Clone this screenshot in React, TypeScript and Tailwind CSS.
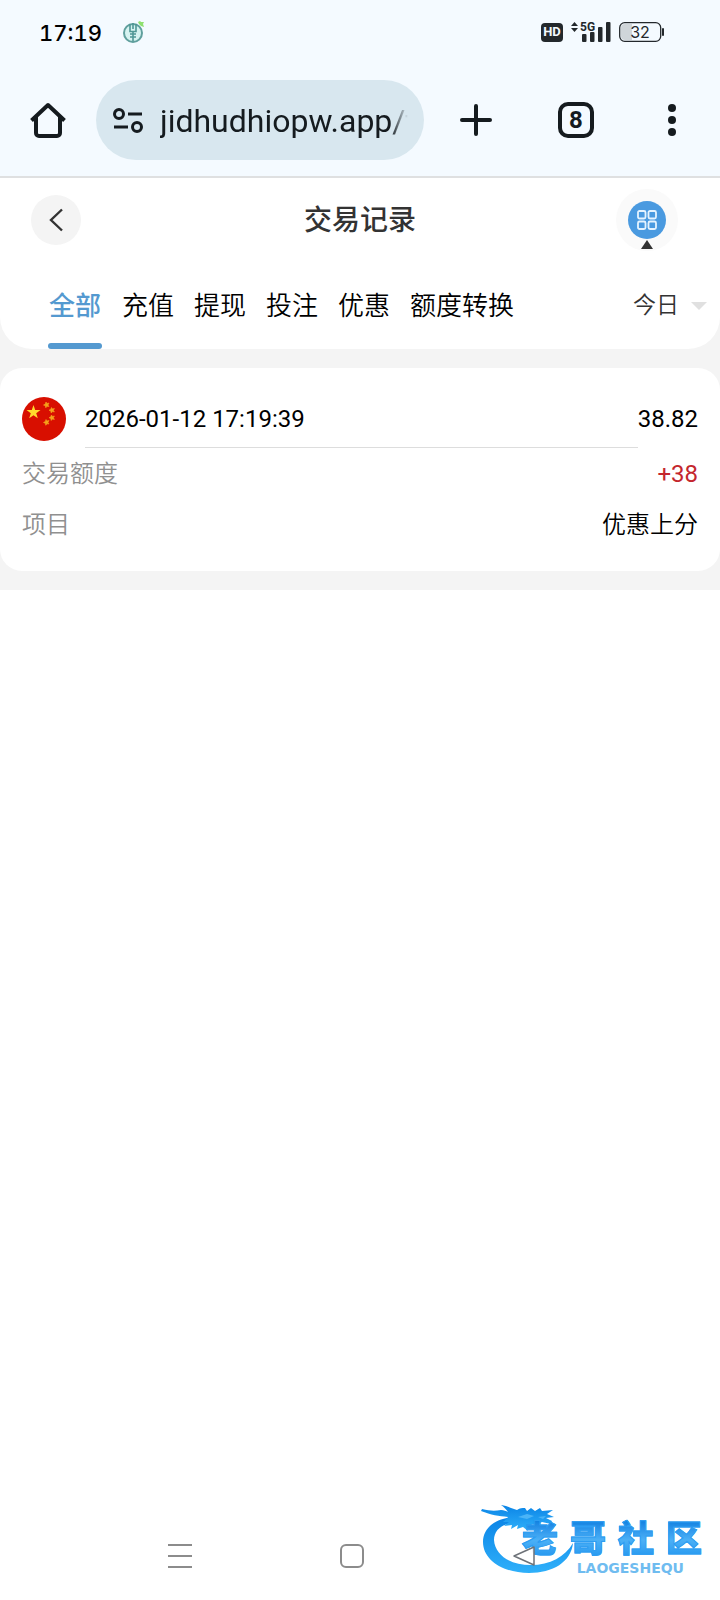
import type { ReactNode } from 'react'

const tabs = ['全部', '充值', '提现', '投注', '优惠', '额度转换']

function StatusBar() {
  return (
    <div className="flex h-16 items-center justify-between bg-[#f4faff] pl-[39px] pr-[55px] text-[#1d2327]">
      <div className="flex items-center gap-5">
        <span className="pt-0.5 font-[Inter,sans-serif] text-[22px] font-medium tabular-nums text-black">17:19</span>
        <svg width="24" height="24" viewBox="0 0 24 24" fill="none">
          <circle cx="11" cy="13" r="9" fill="#d6f3f1" stroke="#5f9f9d" strokeWidth="2" />
          <path d="M8 4v7.500h6V4M11 3v6M8 14h6M8 17h6M11 12v9" stroke="#4f9795" strokeWidth="1.600" />
          <path d="M16 2l2-1 1 1h3l-1 2 1 3-3-1-2-2z" fill="#8ee06f" />
        </svg>
      </div>
      <div className="flex items-center gap-2">
        <span className="flex h-[19px] w-[22px] items-center justify-center rounded-sm bg-[#23282c] font-[Roboto,sans-serif] text-[13px] font-bold text-[#f4faff]">
          HD
        </span>
        <svg width="40" height="24" viewBox="0 0 40 24" fill="#23282c">
          <path d="M0 6l3.500-4L7 6zM0 8h7l-3.500 4z" />
          <text x="9" y="11" fontSize="12" fontWeight="700" fontFamily="Roboto, sans-serif">5G</text>
          <rect x="11" y="14" width="4.500" height="8" rx="1" />
          <rect x="19" y="12" width="4.500" height="10" rx="1" />
          <rect x="27" y="7" width="4.500" height="15" rx="1" />
          <rect x="35" y="2" width="4.500" height="20" rx="1" />
        </svg>
        <svg width="46" height="20" viewBox="0 0 46 20" fill="none">
          <path d="M6 2h7v16H6a4 4 0 0 1-4-4V6a4 4 0 0 1 4-4z" fill="#cfd5d9" />
          <rect x="0.700" y="0.700" width="41" height="18.600" rx="5" stroke="#23282c" strokeWidth="1.300" />
          <path d="M44 7v6" stroke="#23282c" strokeWidth="2" strokeLinecap="round" />
          <text x="21" y="16" textAnchor="middle" fontSize="16" fill="#23282c" fontFamily="Inter, sans-serif">32</text>
        </svg>
      </div>
    </div>
  )
}

function BrowserBar() {
  return (
    <div className="flex h-[114px] items-center border-b-2 border-[#dfe0e1] bg-[#f4faff] text-[#151b1f]">
      <button aria-label="主页" className="flex h-20 w-24 items-center justify-center">
        <svg width="36" height="36" viewBox="0 0 36 36" fill="none" stroke="currentColor" strokeWidth="4">
          <path d="M1.500 18.500L18 3l16.500 15.500" strokeLinejoin="round" />
          <path d="M6 15v16a3 3 0 0 0 3 3h18a3 3 0 0 0 3-3V15" />
        </svg>
      </button>
      <div className="flex h-20 min-w-0 flex-1 items-center gap-4 rounded-full bg-[#d8e7ef] px-4">
        <svg className="shrink-0" width="32" height="28" viewBox="0 0 32 28" fill="none" stroke="currentColor" strokeWidth="3">
          <circle cx="7" cy="8" r="4.500" />
          <path d="M16 8h14M2 21h14" />
          <circle cx="25" cy="21" r="4.500" />
        </svg>
        <input
          aria-label="网址"
          readOnly
          value="jidhudhiopw.app/t"
          className="w-full min-w-0 bg-transparent pt-0.5 font-[Roboto,sans-serif] text-[32px] outline-none [mask-image:linear-gradient(to_right,black_93%,transparent)]"
        />
      </div>
      <button aria-label="新标签页" className="flex h-20 w-[104px] items-center justify-center">
        <svg width="34" height="34" viewBox="0 0 34 34" stroke="currentColor" strokeWidth="4" strokeLinecap="round">
          <path d="M17 3v28M3 17h28" />
        </svg>
      </button>
      <button aria-label="标签页" className="flex h-20 w-24 items-center justify-center">
        <span className="flex size-9 items-center justify-center rounded-[10px] border-4 border-current font-[Roboto,sans-serif] text-2xl font-bold">
          8
        </span>
      </button>
      <button aria-label="更多" className="flex h-20 w-24 items-center justify-center">
        <svg width="8" height="32" viewBox="0 0 8 32" fill="currentColor">
          <circle cx="4" cy="4" r="4" />
          <circle cx="4" cy="16" r="4" />
          <circle cx="4" cy="28" r="4" />
        </svg>
      </button>
    </div>
  )
}

function PageHeader() {
  return (
    <header className="rounded-b-[32px] bg-white">
      <div className="flex h-[84px] items-center justify-between pl-[31px] pr-[42px]">
        <div className="flex flex-1">
          <button aria-label="返回" className="flex size-[50px] items-center justify-center rounded-full bg-[#f4f4f4]">
            <svg width="14" height="24" viewBox="0 0 14 24" fill="none" stroke="#333" strokeWidth="2.400">
              <path d="M13 1.500L2 12l11 10.500" />
            </svg>
          </button>
        </div>
        <h1 className="pl-[11px] pt-0.5 text-[28px] font-medium text-[#333]">交易记录</h1>
        <div className="flex flex-1 justify-end">
          <button aria-label="菜单" className="relative flex size-[62px] items-center justify-center rounded-full bg-[#fafafa]">
            <span className="flex size-[38px] items-center justify-center rounded-full bg-[#4a9ae0]">
              <svg width="20" height="20" viewBox="0 0 20 20" fill="none" stroke="#e4f3ff" strokeWidth="1.800">
                <rect x="1" y="1" width="7.500" height="7.500" rx="1.500" />
                <rect x="11.500" y="1" width="7.500" height="7.500" rx="1.500" />
                <rect x="1" y="11.500" width="7.500" height="7.500" rx="1.500" />
                <rect x="11.500" y="11.500" width="7.500" height="7.500" rx="1.500" />
              </svg>
            </span>
            <svg className="absolute bottom-0.5 left-1/2 -translate-x-1/2" width="12" height="9" viewBox="0 0 12 9" fill="#333">
              <path d="M6 0l6 9H0z" />
            </svg>
          </button>
        </div>
      </div>

      <div className="flex h-[87px] items-stretch justify-between pl-12 pr-[13px]">
        <nav className="flex gap-5 text-[26px]">
          {tabs.map((tab, i) => (
            <button
              key={tab}
              className={
                i === 0
                  ? 'flex w-[54px] flex-col items-center font-medium text-[#5499d0]'
                  : 'flex flex-col items-center font-[350] text-black'
              }
            >
              <span className="flex flex-1 items-center pt-2">{tab}</span>
              <span className={i === 0 ? 'h-1.5 w-full rounded-full bg-[#5499d0]' : 'h-1.5 w-full'} />
            </button>
          ))}
        </nav>
        <label className="flex items-center gap-3">
          <select aria-label="日期" className="appearance-none bg-transparent pt-0.5 text-[23px] font-[350] text-[#333] outline-none">
            <option>今日</option>
            <option>昨日</option>
          </select>
          <svg width="16" height="8" viewBox="0 0 16 8" fill="#e0e0e0">
            <path d="M0 0h16L8 8z" />
          </svg>
        </label>
      </div>
    </header>
  )
}

function Flag() {
  return (
    <svg width="44" height="44" viewBox="0 0 44 44" fill="#ffda2c">
      <circle cx="22" cy="22" r="22" fill="#d80f00" />
      <path d="M11.500 8l1.700 5h5.300l-4.300 3.200 1.600 5.100-4.300-3.100-4.300 3.100 1.600-5.100L4.500 13h5.300z" />
      <g fill="#f5a21b" stroke="#f5a21b" strokeWidth="0.600">
        <path d="M24 5l1 1.500 2-.5-1 2 1 1.500-2-.200-1.200 1.500-.5-2-1.800-.800 1.800-1z" />
        <path d="M29.500 10.500l1 1.500 1.900-.5-1 1.800 1 1.600-2-.300-1.200 1.400-.400-1.900-1.800-.900 1.800-.900z" />
        <path d="M29.500 18l1 1.500 1.900-.5-1 1.800 1 1.600-2-.300-1.200 1.400-.400-1.900-1.800-.900 1.800-.900z" />
        <path d="M24 22.500l1 1.500 2-.5-1 2 1 1.500-2-.200-1.200 1.500-.5-2-1.800-.800 1.800-1z" />
      </g>
    </svg>
  )
}

function Row({ label, children }: { label: string; children: ReactNode }) {
  return (
    <div className="flex h-[51px] items-center justify-between">
      <dt className="font-[350] text-[#909090]">{label}</dt>
      <dd>{children}</dd>
    </div>
  )
}

function RecordCard() {
  return (
    <article className="rounded-[22px] bg-white px-[22px] pb-[21px] pt-[22px] text-2xl text-black">
      <div className="flex h-[58px] items-center">
        <Flag />
        <time className="ml-[19px] flex flex-1 items-center self-stretch border-b border-[#ddd]">2026-01-12 17:19:39</time>
        <span>38.82</span>
      </div>
      <dl>
        <Row label="交易额度">
          <span className="text-[#c4262e]">+38</span>
        </Row>
        <Row label="项目">
          <span className="font-[350]">优惠上分</span>
        </Row>
      </dl>
    </article>
  )
}

function Watermark() {
  return (
    <div className="absolute bottom-5 right-4 h-[76px] w-[224px]">
      <svg width="100" height="76" viewBox="0 0 100 76">
        <defs>
          <linearGradient id="dragon" x1="0" y1="0" x2="0" y2="1">
            <stop offset="0" stopColor="#0b84e6" />
            <stop offset="1" stopColor="#2fb0fa" />
          </linearGradient>
        </defs>
        <g fill="url(#dragon)">
          <path d="M35 13C15 14 3 24 3 38c0 18 20 31 46 31 24 0 42-11 44-30-8 14-23 22-42 22-21 0-36-10-37-25 0-9 7-16 19-17z" />
          <path d="M2 5c8 2 13 2 19 1 3 0 5 1 7 2-2-3-4-5-7-7 7 1 11 4 16 5 3-2 5-2 8-2l2 3 4-3 4 3 5-3 2 3 11-1-6 4 7 3-8 1 6 3-1 3-9-2-4 2-1 3-4-3-6 3 1 4-5-4-6 2 1-4-7 4 1-4-8 1 5-4-6 0c2-2 4-3 5-5-9-1-17-2-27-6z" />
        </g>
        <path d="M38 13l9-3 7 2-7 3zM58 13l8-1-3 3z" fill="#4bb4f7" />
      </svg>
      <div className="absolute right-0.5 top-4 flex w-[180px] justify-between bg-linear-to-b from-[#0a7fe0] via-[#4bb0f6] to-[#1a94ee] bg-clip-text text-[36px] font-black leading-10 text-transparent [-webkit-text-stroke:1px_#2d9df2]">
        <span>老</span>
        <span>哥</span>
        <span>社</span>
        <span>区</span>
      </div>
      <div className="absolute bottom-1 right-5 font-['DejaVu_Sans',sans-serif] text-sm font-bold leading-4 text-[#6fbcf0]">
        LAOGESHEQU
      </div>
    </div>
  )
}

function SystemNav() {
  return (
    <div className="relative mt-auto flex h-[90px] items-center bg-white pl-[94px] pr-[110px] pt-0.5">
      <Watermark />
      <button aria-label="最近任务" className="relative flex flex-1 justify-center">
        <svg width="24" height="24" viewBox="0 0 24 24" stroke="#8c8c8c" strokeWidth="2">
          <path d="M0 1h24M0 12h24M0 23h24" />
        </svg>
      </button>
      <button aria-label="主屏幕" className="relative flex flex-1 justify-center">
        <svg width="24" height="24" viewBox="0 0 24 24" fill="none" stroke="#8c8c8c" strokeWidth="2">
          <rect x="1" y="1" width="22" height="22" rx="5" />
        </svg>
      </button>
      <button aria-label="返回上一页" className="relative flex flex-1 justify-center">
        <svg width="24" height="24" viewBox="0 0 24 24" fill="none" stroke="#6d7278" strokeWidth="1.500" strokeLinejoin="round">
          <path d="M22 3v18L2 12z" fill="#fff" fillOpacity="0.9" />
        </svg>
      </button>
    </div>
  )
}

export default function App() {
  return (
    <div className="flex min-h-screen flex-col bg-white font-[Roboto,'Noto_Sans_CJK_SC',sans-serif]">
      <StatusBar />
      <BrowserBar />
      <main className="bg-[#f4f4f4] pb-[19px]">
        <PageHeader />
        <div className="pt-[19px]">
          <RecordCard />
        </div>
      </main>
      <SystemNav />
    </div>
  )
}
